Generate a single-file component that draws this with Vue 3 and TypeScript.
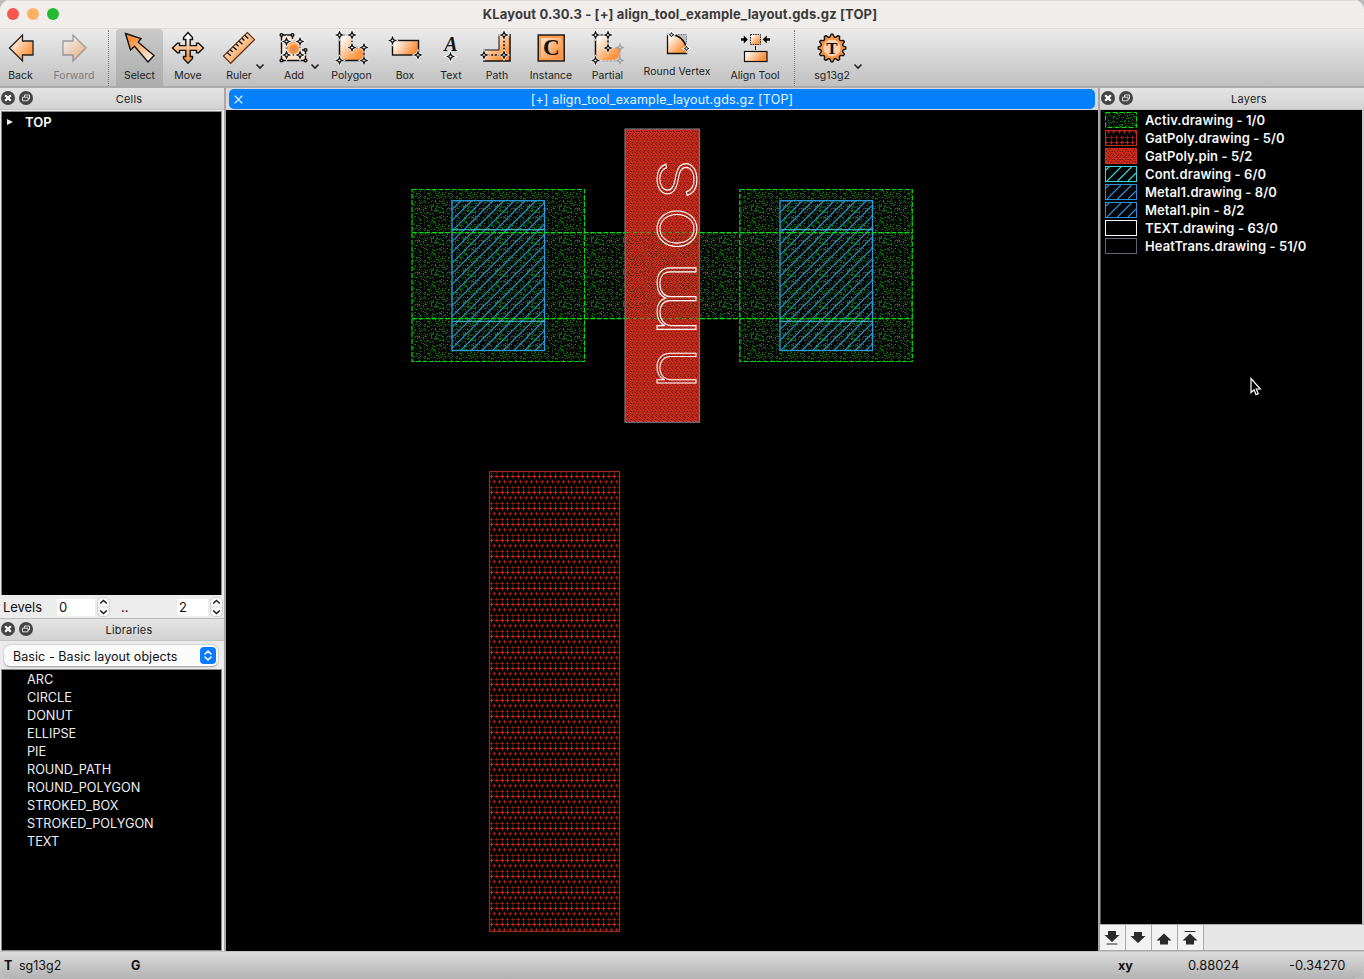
<script setup lang="ts">
interface Tool {
  id: string
  label: string
  width: number
  menu?: number
  active?: boolean
  disabled?: boolean
  raised?: boolean
}

const editTools: Tool[] = [
  { id: 'select', label: 'Select', width: 47, active: true },
  { id: 'move', label: 'Move', width: 50 },
  { id: 'ruler', label: 'Ruler', width: 52, menu: 42 },
  { id: 'add', label: 'Add', width: 58, menu: 45 },
  { id: 'polygon', label: 'Polygon', width: 57 },
  { id: 'box', label: 'Box', width: 50 },
  { id: 'text', label: 'Text', width: 42 },
  { id: 'path', label: 'Path', width: 50 },
  { id: 'instance', label: 'Instance', width: 58 },
  { id: 'partial', label: 'Partial', width: 55 },
  { id: 'round', label: 'Round Vertex', width: 84, raised: true },
  { id: 'align', label: 'Align Tool', width: 72 },
]
const groups: Tool[][] = [
  [
    { id: 'back', label: 'Back', width: 41 },
    { id: 'forward', label: 'Forward', width: 66, disabled: true },
  ],
  editTools,
  [{ id: 'tech', label: 'sg13g2', width: 68, menu: 55 }],
]

const libraries = ['ARC', 'CIRCLE', 'DONUT', 'ELLIPSE', 'PIE', 'ROUND_PATH', 'ROUND_POLYGON', 'STROKED_BOX', 'STROKED_POLYGON', 'TEXT']

const layers = [
  { name: 'Activ.drawing - 1/0', fill: 'url(#activ)', stroke: '#00e000', dash: '5 2' },
  { name: 'GatPoly.drawing - 5/0', fill: 'url(#plus)', stroke: '#c22a1c', dash: '' },
  { name: 'GatPoly.pin - 5/2', fill: 'url(#dense)', stroke: '#d62a1c', dash: '' },
  { name: 'Cont.drawing - 6/0', fill: 'none', stroke: '#35d8dc', dash: '' },
  { name: 'Metal1.drawing - 8/0', fill: 'none', stroke: '#2b93dc', dash: '' },
  { name: 'Metal1.pin - 8/2', fill: 'none', stroke: '#2b93dc', dash: '' },
  { name: 'TEXT.drawing - 63/0', fill: 'none', stroke: '#ffffff', dash: '' },
  { name: 'HeatTrans.drawing - 51/0', fill: 'none', stroke: '#62627a', dash: '' },
]

const star = (x: number, y: number) =>
  `M${x - 3} ${y}L${x - 0.9} ${y - 0.9}L${x} ${y - 3}L${x + 0.9} ${y - 0.9}L${x + 3} ${y}L${x + 0.9} ${y + 0.9}L${x} ${y + 3}L${x - 0.9} ${y + 0.9}Z`
const stars = (pts: number[][]) => pts.map(([x, y]) => star(x, y)).join('')

// Pseudo-random stipple cells for the active-area fill
const dots: { x: number; y: number; c: string }[] = []
let seed = 11
const rnd = () => (seed = (seed * 1103515245 + 12345) % 2147483648) / 2147483648
const tones = ['#007a00', '#009400', '#005a00', '#2c3a2c', '#1c2a1c', '#004400']
for (let y = 0; y < 32; y++) {
  for (let x = 0; x < 32; x++) {
    if (rnd() < 0.31) dots.push({ x, y, c: tones[Math.floor(rnd() * tones.length)] })
  }
}

// Diagonal hatch, phase-locked to the canvas origin
const hatch = (x: number, y: number, w: number, h: number) => {
  let d = ''
  const step = 32 / 3
  for (let k = Math.ceil((x + y) / step); k * step + 0.4 < x + w + y + h; k++) {
    const s = k * step + 0.4
    const x1 = Math.max(x, s - y - h)
    const x2 = Math.min(x + w, s - y)
    d += `M${x1} ${s - x1}L${x2} ${s - x2}`
  }
  return d
}
const contacts = [452.5, 780.5]

// Letters of the pin label: baseline offset and horizontal stretch
const pinLetters = [
  { ch: 'n', x: -0.5, sx: 1.03 },
  { ch: 'm', x: 51.5, sx: 1.26 },
  { ch: 'o', x: 138, sx: 1.07 },
  { ch: 's', x: 188.5, sx: 1.17 },
]

const gear = (() => {
  const p: string[] = []
  for (let i = 0; i < 48; i++) {
    const a = (i / 48) * Math.PI * 2 - 0.065
    const r = i % 4 < 2 ? 13.8 : 11.2
    p.push(`${(17 + Math.cos(a) * r).toFixed(2)},${(17 + Math.sin(a) * r).toFixed(2)}`)
  }
  return p.join(' ')
})()
</script>

<template>
  <div class="desktop">
    <svg class="defs" width="0" height="0">
      <defs>
        <linearGradient id="og" x1="0" y1="0" x2="1" y2="1">
          <stop offset="0.1" stop-color="#fff" />
          <stop offset="0.75" stop-color="#ff9a48" />
          <stop offset="1" stop-color="#f88a38" />
        </linearGradient>
        <linearGradient id="oh" x1="0" y1="0" x2="1" y2="0.4">
          <stop offset="0.1" stop-color="#fff" />
          <stop offset="1" stop-color="#f98b34" />
        </linearGradient>
        <linearGradient id="oi" x1="0" y1="0" x2="1" y2="1">
          <stop offset="0.2" stop-color="#f98f3c" />
          <stop offset="0.9" stop-color="#fff0e0" />
        </linearGradient>
        <linearGradient id="ov" x1="0" y1="0" x2="0" y2="1">
          <stop offset="0.15" stop-color="#fff" />
          <stop offset="0.7" stop-color="#f9a058" />
        </linearGradient>
        <pattern id="activ" width="32" height="32" patternUnits="userSpaceOnUse" shape-rendering="crispEdges">
          <rect v-for="(p, i) in dots" :key="i" :x="p.x" :y="p.y" width="1" height="1" :fill="p.c" />
        </pattern>
        <pattern id="plus" width="16" height="16" patternUnits="userSpaceOnUse" x="489" y="471">
          <g stroke="#a42416" stroke-width="1">
            <path d="M0.5 5.5h4M6 5.5h4M11 5.5h4M2.5 3.5v4M8 3.5v4M13.4 3.5v4" stroke="#cc2618" />
            <path d="M0 10.8h2M3.4 10.8h3.8M8.7 10.8h3.8M14 10.8h2M5.3 8.8v4M10.6 8.8v4M15.7 8.8v4" />
            <path d="M0.5 0.5h4M6 0.5h4M11 0.5h4M2.5 0v2.5M8 0v2.5M13.4 0v2.5M2.5 14.5v1.5M8 14.5v1.5M13.4 14.5v1.5" opacity="0.85" />
          </g>
        </pattern>
        <pattern id="dense" width="8" height="8" patternUnits="userSpaceOnUse" shape-rendering="crispEdges">
          <rect width="8" height="8" fill="#cc2a1b" />
          <path d="M0 0h1v1h-1zM3 0h1v1h-1zM5 1h1v1h-1zM1 3h1v1h-1zM4 3h1v1h-1zM7 3h1v1h-1zM3 5h1v1h-1zM6 5h1v1h-1zM0 6h1v1h-1zM4 7h1v1h-1z" fill="#5a120a" />
          <path d="M2 1h1v1h-1zM6 3h1v1h-1zM2 4h1v1h-1zM5 6h1v1h-1zM7 7h1v1h-1zM1 7h1v1h-1zM4 1h1v1h-1z" fill="#8e1c10" />
        </pattern>
      </defs>
    </svg>

    <div class="window">
      <header class="titlebar">
        <div class="lights"><i class="red" /><i class="amber" /><i class="green" /></div>
        <span class="title">KLayout 0.30.3 - [+] align_tool_example_layout.gds.gz [TOP]</span>
      </header>

      <nav class="toolbar">
        <div v-for="(g, gi) in groups" :key="gi" class="group">
          <div
            v-for="t in g"
            :key="t.id"
            class="tool"
            :class="{ active: t.active, disabled: t.disabled, raised: t.raised }"
            :style="{ width: t.width + 'px' }"
          >
            <svg class="icon" viewBox="0 0 34 34" width="34" height="34" stroke-linejoin="miter">
              <g v-if="t.id === 'back'" stroke="#222" stroke-width="1.3">
                <path d="M5.5 17L18.5 4V10H29V24H18.5V30Z" fill="url(#og)" />
              </g>
              <g v-else-if="t.id === 'forward'" stroke="#444" stroke-width="1.3">
                <path d="M29 17L16 4V10H6V24H16V30Z" fill="url(#og)" />
              </g>
              <path v-else-if="t.id === 'select'" d="M2.5 2.5L18 7.5L15.2 11.2L31 24.5L25 31L11.5 15.3L7.5 19Z" fill="url(#oi)" stroke="#111" stroke-width="1.4" />
              <path
                v-else-if="t.id === 'move'"
                d="M17 1.5L21.5 6.5V8.5H19.2V14.6H25.5V12.3H27.5L32.5 17L27.5 21.7H25.5V19.4H19.2V25.5H21.5V27.5L17 32.3L12.5 27.5V25.5H14.8V19.4H8.5V21.7H6.5L1.5 17L6.5 12.3H8.5V14.6H14.8V8.5H12.5V6.5Z"
                fill="url(#ov)"
                stroke="#111"
                stroke-width="1.4"
              />
              <g v-else-if="t.id === 'ruler'">
                <path d="M25.3 1.5L32.5 8.7L8.7 32.3L1.5 25Z" fill="url(#og)" stroke="#5a3318" stroke-width="1.2" />
                <path d="M5.2 21.5l3.6 3.2M8.2 18.7l2.6 2.4M11.1 15.8l3.6 3.2M14 12.9l2.6 2.4M16.9 10l3.6 3.2M19.8 7.1l2.6 2.4M22.7 4.2l3.6 3.2" stroke="#111" stroke-width="1.4" />
              </g>
              <g v-else-if="t.id === 'add'" fill="none" stroke="#111" stroke-width="1.4">
                <path d="M4.5 4H15.5V13H22.5V19H28.5V29.5H4.5Z" fill="#fde2cc" stroke="none" />
                <path d="M15.5 8V4H4.5V29.5H28.5V19H25" />
                <path d="M9.5 10.5H23V24H9.5Z" fill="#fbb67c" stroke-dasharray="2 1.6" />
                <circle cx="17" cy="18" r="4.5" fill="#f98f3c" stroke="none" />
                <path d="M14 19.5l3.5-3v3z" fill="#999" stroke="none" />
                <path :d="stars([[9.5, 10.5], [23, 10.5], [9.5, 24], [23, 24]])" fill="#fff" stroke="#fff" stroke-width="3" />
                <path :d="stars([[9.5, 10.5], [23, 10.5], [9.5, 24], [23, 24]])" fill="#fff" stroke-width="1.3" />
                <g fill="#bbb"><circle cx="4.5" cy="4" r="1.4" /><circle cx="15.5" cy="4" r="1.4" /><circle cx="28.5" cy="19" r="1.4" /><circle cx="28.5" cy="29.5" r="1.4" /><circle cx="4.5" cy="29.5" r="1.4" /></g>
              </g>
              <g v-else-if="t.id === 'polygon'" fill="none" stroke="#111" stroke-width="1.5">
                <path d="M4.5 4H17V16.5H29V29.5H4.5Z" fill="url(#og)" stroke="none" />
                <path d="M4.5 4V29.5H29V16.5" />
                <path d="M4.5 4H17V16.5H29" stroke-dasharray="2 1.6" />
                <path :d="stars([[4.5, 4], [17, 4], [17, 16.5], [29, 16.5], [29, 29.5], [4.5, 29.5]])" fill="#fff" stroke="#fff" stroke-width="2.6" />
                <path :d="stars([[4.5, 4], [17, 4], [17, 16.5], [29, 16.5], [29, 29.5], [4.5, 29.5]])" fill="#fff" stroke-width="1.3" />
              </g>
              <g v-else-if="t.id === 'box'" stroke="#111" stroke-width="1.4">
                <rect x="4.5" y="9.5" width="26" height="14.5" fill="url(#oh)" />
                <path :d="stars([[4.5, 9.5], [30, 24]])" fill="#fff" stroke="#fff" stroke-width="2.6" />
                <path :d="stars([[4.5, 9.5], [30, 24]])" fill="#fff" stroke-width="1.3" />
              </g>
              <g v-else-if="t.id === 'text'">
                <text x="17" y="19.5" class="glyph italic" font-size="20">A</text>
                <path :d="star(16.5, 25.5)" stroke="#fff" stroke-width="3" />
                <path :d="star(16.5, 25.5)" fill="#fff" stroke="#111" stroke-width="1.3" />
              </g>
              <g v-else-if="t.id === 'path'" fill="none" stroke="#111" stroke-width="1.5">
                <path d="M3 19H19V3H30V30H3Z" fill="url(#og)" stroke="none" />
                <path d="M3 30H30V3" /><path d="M3 19H19V3" stroke-width="1" />
                <path d="M4 24H24V4" stroke-dasharray="2 1.6" />
                <path :d="stars([[24, 4], [24, 24], [4, 24]])" fill="#fff" stroke="#fff" stroke-width="2.6" />
                <path :d="stars([[24, 4], [24, 24], [4, 24]])" fill="#fff" stroke-width="1.3" />
              </g>
              <g v-else-if="t.id === 'instance'">
                <rect x="4.2" y="4" width="26" height="26" fill="#f99a50" stroke="#111" stroke-width="1.4" />
                <rect x="7" y="7" width="20.5" height="20.5" fill="url(#og)" opacity="0.65" />
                <text x="17.3" y="24.3" class="glyph" font-size="23">C</text>
              </g>
              <g v-else-if="t.id === 'partial'" fill="none" stroke="#111" stroke-width="1.5">
                <path d="M4.5 4H17V17H23Q30 15 29 22Q29 29 20 29H4.5Z" fill="url(#og)" stroke="none" />
                <path d="M17 17V4H4.5V30" />
                <path d="M17 17H29M4.5 30H29V17" stroke="#aaa" stroke-dasharray="2 1.6" />
                <path :d="stars([[29, 16.5], [29, 29.5]])" fill="#ddd" stroke="#999" stroke-width="1.1" />
                <path :d="stars([[4.5, 4], [17, 4], [17, 17], [4.5, 29.5]])" fill="#fff" stroke="#fff" stroke-width="2.6" />
                <path :d="stars([[4.5, 4], [17, 4], [17, 17], [4.5, 29.5]])" fill="#fff" stroke-width="1.3" />
              </g>
              <g v-else-if="t.id === 'round'" fill="none" stroke="#111" stroke-width="1.3">
                <rect x="13" y="3.5" width="13.5" height="14" fill="#bdbdbd" stroke="#777" stroke-width="1" stroke-dasharray="1.5 1" />
                <path d="M7.5 3.5H11.5Q24 5 26.5 17.5V22.5H7.5Z" fill="url(#og)" />
                <g transform="translate(11.5 3.8) scale(0.75)"><path :d="star(0, 0)" fill="#fff" stroke="#fff" stroke-width="3" /><path :d="star(0, 0)" fill="#fff" /></g>
                <g transform="translate(26.5 17.5) scale(0.75)"><path :d="star(0, 0)" fill="#fff" stroke="#fff" stroke-width="3" /><path :d="star(0, 0)" fill="#fff" /></g>
              </g>
              <g v-else-if="t.id === 'align'" stroke="#111">
                <rect x="12.5" y="3.5" width="10" height="10" fill="url(#og)" stroke-width="1" stroke-dasharray="1.4 1" />
                <path d="M3 8.5H6M32 8.5H28" stroke-width="2.6" />
                <path d="M5.8 4.5L9.8 8.5L5.8 12.5ZM28.7 4.5L24.7 8.5L28.7 12.5Z" stroke="none" />
                <path d="M17.5 15V19" stroke-width="1" />
                <rect x="6.5" y="20.5" width="22.5" height="10" fill="url(#oh)" stroke-width="1.2" />
              </g>
              <g v-else>
                <polygon :points="gear" fill="#f99444" stroke="#111" stroke-width="1.4" stroke-linejoin="round" />
                <circle cx="17" cy="17" r="8.5" fill="#fcd0ae" />
                <text x="17" y="22.6" class="glyph" font-size="17">T</text>
              </g>
            </svg>
            <span class="label">{{ t.label }}</span>
            <svg v-if="t.menu" class="chev" :style="{ left: t.menu + 'px' }" width="10" height="7" viewBox="0 0 10 7">
              <path d="M1.5 1.5L5 5L8.5 1.5" fill="none" stroke="#222" stroke-width="1.6" />
            </svg>
          </div>
        </div>
      </nav>

      <main class="body">
        <aside class="left">
          <section class="dock cells">
            <div class="dockhead">
              <svg class="dbtns" width="34" height="16" viewBox="0 0 34 16">
                <circle cx="8" cy="8" r="7" fill="#444" /><path d="M5.2 5.2l5.6 5.6M10.8 5.2l-5.6 5.6" stroke="#fff" stroke-width="2.2" />
                <circle cx="26" cy="8" r="7" fill="#444" /><path d="M24.5 7V5h5v4h-1.5M22.5 7.2h5.5v3.6h-5.5z" fill="none" stroke="#ddd" />
              </svg>
              <span>Cells</span>
            </div>
            <div class="tree"><div class="node"><i class="tri" />TOP</div></div>
          </section>
          <div class="levels">
            <span class="lv">Levels</span>
            <span class="num first">0</span>
            <svg class="spin" width="13" height="20" viewBox="0 0 13 20"><rect x="0.5" y="0.5" width="12" height="19" rx="4" fill="#fafafa" stroke="#d0d0d0" /><path d="M0.5 10h12" stroke="#ddd" /><path d="M3.2 6.5l3.3-3l3.3 3M3.2 13.5l3.3 3l3.3-3" fill="none" stroke="#222" stroke-width="1.6" /></svg>
            <span class="dd">..</span>
            <span class="num">2</span>
            <svg class="spin" width="13" height="20" viewBox="0 0 13 20"><rect x="0.5" y="0.5" width="12" height="19" rx="4" fill="#fafafa" stroke="#d0d0d0" /><path d="M0.5 10h12" stroke="#ddd" /><path d="M3.2 6.5l3.3-3l3.3 3M3.2 13.5l3.3 3l3.3-3" fill="none" stroke="#222" stroke-width="1.6" /></svg>
          </div>
          <section class="dock libs">
            <div class="dockhead">
              <svg class="dbtns" width="34" height="16" viewBox="0 0 34 16">
                <circle cx="8" cy="8" r="7" fill="#444" /><path d="M5.2 5.2l5.6 5.6M10.8 5.2l-5.6 5.6" stroke="#fff" stroke-width="2.2" />
                <circle cx="26" cy="8" r="7" fill="#444" /><path d="M24.5 7V5h5v4h-1.5M22.5 7.2h5.5v3.6h-5.5z" fill="none" stroke="#ddd" />
              </svg>
              <span>Libraries</span>
            </div>
            <div class="combo-row">
              <div class="combo">
                <span>Basic - Basic layout objects</span>
                <svg width="16" height="17" viewBox="0 0 16 17"><rect width="16" height="17" rx="4" fill="#0a7bff" /><path d="M5 7l3-3l3 3M5 10l3 3l3-3" fill="none" stroke="#fff" stroke-width="1.5" stroke-linecap="round" /></svg>
              </div>
            </div>
            <ul class="liblist"><li v-for="l in libraries" :key="l">{{ l }}</li></ul>
          </section>
        </aside>

        <section class="center">
          <div class="tabbar">
            <div class="tab">
              <svg width="9" height="9" viewBox="0 0 9 9"><path d="M0.7 0.7l7.6 7.6M8.3 0.7l-7.6 7.6" stroke="#fff" stroke-width="1.2" /></svg>
              <span>[+] align_tool_example_layout.gds.gz [TOP]</span>
            </div>
          </div>
          <svg class="canvas" width="872" height="841" viewBox="226 110 872 841">
            <path d="M412 189H585V233H740V189H913V362H740V319H585V362H412Z" fill="url(#activ)" />
            <g fill="none" stroke="#00d810" stroke-width="1.2" stroke-dasharray="5 1.6">
              <rect x="412" y="189.5" width="172.5" height="172" />
              <rect x="739.8" y="189.5" width="172.5" height="172" />
            </g>
            <rect x="489.5" y="471.5" width="130" height="460" fill="url(#plus)" stroke="#9c2a20" stroke-width="1.2" />
            <g v-for="x in contacts" :key="x" fill="none" stroke="#2495d2" stroke-width="1.1">
              <path :d="hatch(x, 201, 92, 150)" />
              <rect :x="x - 0.5" y="200.7" width="92.5" height="149.8" stroke="#2a9de0" stroke-width="1.3" />
              <path :d="`M${x} 229.8h92M${x} 321.3h92`" stroke="#48d4e0" />
            </g>
            <rect x="625" y="129" width="74.5" height="293.3" fill="url(#dense)" stroke="#74717f" stroke-width="1.2" />
            <rect x="626" y="234" width="73" height="85" fill="url(#activ)" opacity="0.3" />
            <path d="M412 232.6H625M700 232.6H913M412 318.7H625M700 318.7H913" stroke="#00e010" stroke-width="1.2" stroke-dasharray="5 1.6" fill="none" />
            <path d="M626 232.6H699M626 318.7H699" stroke="#4fa028" stroke-width="1" stroke-dasharray="4 3" fill="none" />
            <g transform="translate(696.3 389) rotate(-90)">
              <text v-for="p in pinLetters" :key="p.ch" class="pin-label" :transform="`translate(${p.x} 0) scale(${p.sx} 1)`">{{ p.ch }}</text>
            </g>
          </svg>
        </section>

        <aside class="right">
          <div class="dockhead">
            <svg class="dbtns" width="34" height="16" viewBox="0 0 34 16">
              <circle cx="8" cy="8" r="7" fill="#444" /><path d="M5.2 5.2l5.6 5.6M10.8 5.2l-5.6 5.6" stroke="#fff" stroke-width="2.2" />
              <circle cx="26" cy="8" r="7" fill="#444" /><path d="M24.5 7V5h5v4h-1.5M22.5 7.2h5.5v3.6h-5.5z" fill="none" stroke="#ddd" />
            </svg>
            <span>Layers</span>
          </div>
          <ul class="layers">
            <li v-for="(l, i) in layers" :key="l.name">
              <svg width="32" height="16" viewBox="0 0 32 16">
                <rect x="0.5" y="0.5" width="31" height="15" :fill="l.fill" :stroke="l.stroke" :stroke-dasharray="l.dash" />
                <path v-if="i > 2 && i < 6" d="M1 4L4 1M2 15L16 1M12.5 15L26.5 1M23 15L31 7" :stroke="l.stroke" stroke-width="1.1" />
              </svg>
              <span>{{ l.name }}</span>
            </li>
            <li class="cursor"><svg width="14" height="20" viewBox="0 0 14 20"><path d="M2 1.5V15.5L5 12.7L7 17.6L9.3 16.6L7.2 12H11.3Z" fill="#000" stroke="#fff" stroke-width="1.2" /></svg></li>
          </ul>
          <div class="order">
            <button><svg width="16" height="16"><path d="M4 1h8v4h3.5L8 12L0.5 5H4zM2.5 13.5h11v1h-11z" /></svg></button>
            <button><svg width="16" height="16"><path d="M4 2h8v4h3.5L8 13L0.5 6H4z" /></svg></button>
            <button><svg width="16" height="16"><path d="M4 14.5h8v-4h3.5L8 3.5L0.5 10.5H4z" /></svg></button>
            <button><svg width="16" height="16"><path d="M4 14.5h8v-4h3.5L8 3.5L0.5 10.5H4zM2.5 1h11v1h-11z" /></svg></button>
          </div>
        </aside>
      </main>

      <footer class="status">
        <b class="s-t">T</b><span class="s-tech">sg13g2</span><b class="s-g">G</b>
        <b class="s-xy">xy</b><span class="s-x">0.88024</span><span class="s-y">-0.34270</span>
      </footer>
    </div>
  </div>
</template>

<style>
html, body { margin: 0; background: #b9b9b9; overflow: hidden; }
</style>

<style scoped>
* { box-sizing: border-box; }
.desktop { width: 1364px; height: 979px; background: #bcbcbc; font-family: Inter, 'Liberation Sans', sans-serif; font-size: 13px; color: #111; }
.defs { display: block; height: 0; }
.window { width: 1364px; height: 979px; display: flex; flex-direction: column; border-radius: 10px; overflow: hidden; background: #e6e6e6; }
.titlebar { height: 28px; display: flex; align-items: center; justify-content: center; background: #f0edea; border-top: 1px solid #dcdad8; position: relative; }
.lights { position: absolute; left: 7px; top: 7px; display: flex; gap: 8px; }
.lights i { width: 12px; height: 12px; border-radius: 50%; }
.red { background: #f9544d; } .amber { background: #fdb165; } .green { background: #24b932; }
.title { font-weight: 700; font-size: 13px; line-height: 16px; color: #3b3a3a; letter-spacing: 0.14px; margin: -2px 0 0 -4px; white-space: nowrap; }
.toolbar { height: 60px; display: flex; background: linear-gradient(#ebebeb, #c0c0c0); border-top: 1px solid #dcdcdc; border-bottom: 2px solid #acacac; }
.group { display: flex; }
.group + .group { position: relative; padding-left: 9px; }
.group + .group::before { content: ''; position: absolute; left: 1px; top: 1px; height: 56px; border-left: 1px dotted #777; }
.group:last-child { padding-left: 7px; }
.group:last-child::before { left: 3px; }
.tool { position: relative; display: flex; flex-direction: column; align-items: center; padding-top: 2px; height: 57px; }
.tool.active { background: linear-gradient(#c9c9c9, #acacac); border-radius: 4px 4px 0 0; }
.tool.disabled { opacity: 0.45; }
.icon { display: block; flex: none; }
.label { font-size: 10.5px; line-height: 14px; margin-top: 4px; letter-spacing: 0.02px; white-space: nowrap; color: #1c1c1c; }
.raised .label { margin-top: 0; }
.chev { position: absolute; top: 34px; }
.glyph { font-family: 'Liberation Serif', serif; font-weight: 700; text-anchor: middle; fill: #111; }
.italic { font-style: italic; }
.body { flex: 1; display: flex; min-height: 0; }
.left { width: 226px; display: flex; flex-direction: column; border-right: 2px solid #a8a8a8; background: #ececec; }
.dock { display: flex; flex-direction: column; }
.cells { height: 508px; }
.dockhead { position: relative; height: 22px; flex: none; display: flex; align-items: center; justify-content: center; background: linear-gradient(#e4e4e4, #d2d2d2); border-bottom: 1px solid #c4c4c4; font-size: 11px; letter-spacing: 0.2px; padding-left: 34px; color: #222; }
.dbtns { position: absolute; left: 0; top: 2px; }
.tree { flex: 1; background: #000; margin: 1px 2px 1px 1px; border: 1px solid #888; color: #fff; font-weight: 600; padding: 1px 0 0 5px; border-bottom: 0; }
.node { display: flex; align-items: center; height: 18px; font-size: 13px; line-height: 16px; }
.tri { border-left: 6px solid #eee; border-top: 3.5px solid transparent; border-bottom: 3.5px solid transparent; margin-right: 12px; }
.levels { height: 23px; display: flex; align-items: center; padding-left: 3px; font-size: 13px; border-bottom: 1px solid #bcbcbc; flex: none; }
.lv { width: 54px; letter-spacing: -0.05px; }
.num { width: 31px; height: 17px; line-height: 17px; background: #fff; padding-left: 2px; }
.num.first { width: 38px; }
.spin { margin-left: 2px; } .dd { width: 67px; padding-left: 11px; }
.libs { flex: 1; }
.combo-row { height: 28px; padding: 4px 0 0 4px; }
.combo { width: 214px; height: 21px; border-radius: 6px; background: #fbfbfb; box-shadow: 0 0.5px 2px rgba(0, 0, 0, 0.35); display: flex; align-items: center; justify-content: space-between; padding: 0 2px 0 9px; font-size: 12.5px; letter-spacing: 0.07px; }
.combo span { margin-top: 1px; }
.liblist { flex: 1; list-style: none; margin: 0 2px 0 1px; padding: 1px 0 0 25px; background: #000; border: 1px solid #888; color: #eee; font-size: 12.7px; }
.liblist li { height: 18px; line-height: 18px; }
.center { width: 872px; display: flex; flex-direction: column; background: #000; }
.tabbar { height: 22px; background: #d8d8d8; padding: 1px 3px 0 3px; }
.tab { height: 20px; border-radius: 5px; background: #0580fd; color: #e8f4ff; display: flex; align-items: center; padding-left: 5px; font-size: 12.5px; }
.tab span { flex: 1; text-align: center; margin-right: 14px; letter-spacing: 0.17px; }
.canvas { display: block; background: #000; }
.pin-label { font-family: Inter, sans-serif; font-weight: 200; font-size: 71px; fill: none; stroke: #fff; stroke-width: 1; }
.right { width: 266px; display: flex; flex-direction: column; border-left: 2px solid #a8a8a8; background: #e6e6e6; }
.layers { position: relative; flex: 1; list-style: none; margin: 0; padding: 1px 0 0 4px; background: #000; border-left: 1px solid #555; border-right: 2px solid #c8c8c8; color: #f6f6f6; font-weight: 600; font-size: 13px; letter-spacing: 0.08px; }
.layers li { height: 18px; display: flex; align-items: center; gap: 8px; white-space: nowrap; }
.layers li svg { flex: none; }
.layers li.cursor { position: absolute; left: 148px; top: 267px; height: 20px; }
.order { height: 27px; flex: none; display: flex; border-top: 1px solid #aaa; border-bottom: 1px solid #aaa; }
.order button { width: 26px; padding: 0 1px 0 0; border: 0; border-right: 1.5px solid #aaa; background: #f2f2f2; display: flex; align-items: center; justify-content: center; }
.order svg { fill: #2b2b2b; flex: none; }
.status { height: 28px; display: flex; align-items: center; background: linear-gradient(#dcdcdc, #b2b2b2); border-top: 1px solid #c4c4c4; font-size: 12.5px; color: #111; }
.status b { font-weight: 700; }
.s-t { width: 19px; padding-left: 4px; } .s-tech { width: 112px; } .s-g { width: 987px; } .s-xy { width: 70px; } .s-x { width: 101px; }
.s-x, .s-y { font-size: 12.9px; }
</style>
